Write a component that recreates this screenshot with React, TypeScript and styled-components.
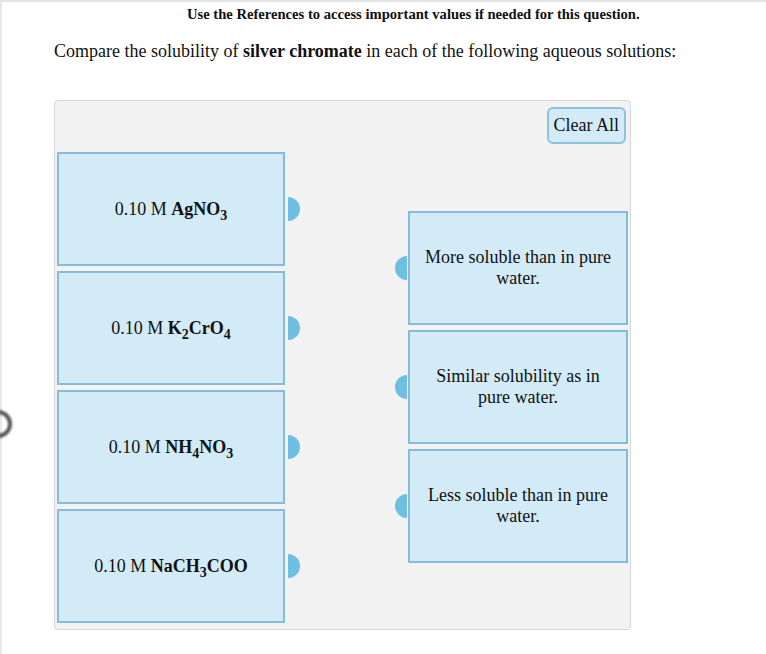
import React from 'react';
import styled, { createGlobalStyle } from 'styled-components';

const GlobalStyle = createGlobalStyle`
  html, body {
    margin: 0;
    padding: 0;
    background: #ffffff;
    overflow: hidden;
  }
  body {
    font-family: "Liberation Serif", "Times New Roman", serif;
    color: #111;
  }
`;

// --- layout ---

const Page = styled.div`
  position: relative;
  width: 766px;
  height: 654px;
  box-sizing: border-box;
  border-top: 2px solid #e4e4e4;
  border-left: 2px solid #e8e8e8;
`;

const RefNote = styled.div`
  padding: 4px 0 0 185px;
  font-size: 14.6px;
  font-weight: bold;
  line-height: 17px;
`;

const Question = styled.p`
  margin: 17px 0 0 52px;
  font-size: 18px;
  line-height: 22px;

  b {
    font-weight: bold;
  }
`;

const Panel = styled.div`
  margin: 38px 0 0 52px;
  width: 577px;
  height: 530px;
  box-sizing: border-box;
  background: #f2f2f2;
  border: 1px solid #d3d6da;
  border-radius: 4px;
  padding: 6px 2px 0 2px;
`;

const Toolbar = styled.div`
  display: flex;
  justify-content: flex-end;
  padding-right: 2px;
`;

const ClearButton = styled.button`
  font-family: "Liberation Serif", "Times New Roman", serif;
  font-size: 18px;
  color: #111;
  background: #d3eaf7;
  border: 2px solid #8ec1dc;
  border-radius: 6px;
  padding: 5px 5px 6px;
  line-height: 22px;
`;

const Board = styled.div`
  display: grid;
  grid-template-columns: 228px 220px;
  justify-content: space-between;
  margin-top: 8px;
`;

const Column = styled.div<{ $offset?: number }>`
  display: flex;
  flex-direction: column;
  gap: 5px;
  padding-top: ${({ $offset }) => $offset ?? 0}px;
`;

const Card = styled.div`
  position: relative;
  height: 114px;
  box-sizing: border-box;
  background: #d3eaf7;
  border: 2px solid #86bcda;
  display: flex;
  align-items: center;
  justify-content: center;
  text-align: center;
  font-size: 18px;
  line-height: 21px;
  padding: 0 14px;
`;

// half-round connector tab on a card's edge
const Tab = styled.span<{ $side: 'left' | 'right' }>`
  position: absolute;
  top: 50%;
  width: 12px;
  height: 24px;
  margin-top: -12px;
  background: #6ebfe2;
  ${({ $side }) =>
    $side === 'right'
      ? 'right: -17px; border-radius: 0 12px 12px 0;'
      : 'left: -15px; border-radius: 12px 0 0 12px;'}
`;

const Formula = styled.span`
  font-weight: bold;

  sub {
    font-size: 14px;
    line-height: 0;
    vertical-align: -5px;
  }
`;

const Spinner = styled.div`
  position: absolute;
  left: -18px;
  top: 408px;
  width: 20px;
  height: 20px;
  border: 4px solid #3a3a3a;
  border-radius: 50%;
  filter: blur(1.2px);
  opacity: 0.85;
`;

const solutions: React.ReactNode[] = [
  <>AgNO<sub>3</sub></>,
  <>K<sub>2</sub>CrO<sub>4</sub></>,
  <>NH<sub>4</sub>NO<sub>3</sub></>,
  <>NaCH<sub>3</sub>COO</>,
];

const outcomes = [
  'More soluble than in pure water.',
  'Similar solubility as in pure water.',
  'Less soluble than in pure water.',
];

export default function App() {
  return (
    <>
      <GlobalStyle />
      <Page>
        <RefNote>Use the References to access important values if needed for this question.</RefNote>
        <Question>
          Compare the solubility of <b>silver chromate</b> in each of the following aqueous solutions:
        </Question>

        <Panel>
          <Toolbar>
            <ClearButton>Clear All</ClearButton>
          </Toolbar>
          <Board>
            <Column>
              {solutions.map((f, i) => (
                <Card key={i}>
                  <span>
                    0.10 M <Formula>{f}</Formula>
                  </span>
                  <Tab $side="right" />
                </Card>
              ))}
            </Column>
            <Column $offset={59}>
              {outcomes.map((o) => (
                <Card key={o}>
                  {o}
                  <Tab $side="left" />
                </Card>
              ))}
            </Column>
          </Board>
        </Panel>
        <Spinner />
      </Page>
    </>
  );
}
